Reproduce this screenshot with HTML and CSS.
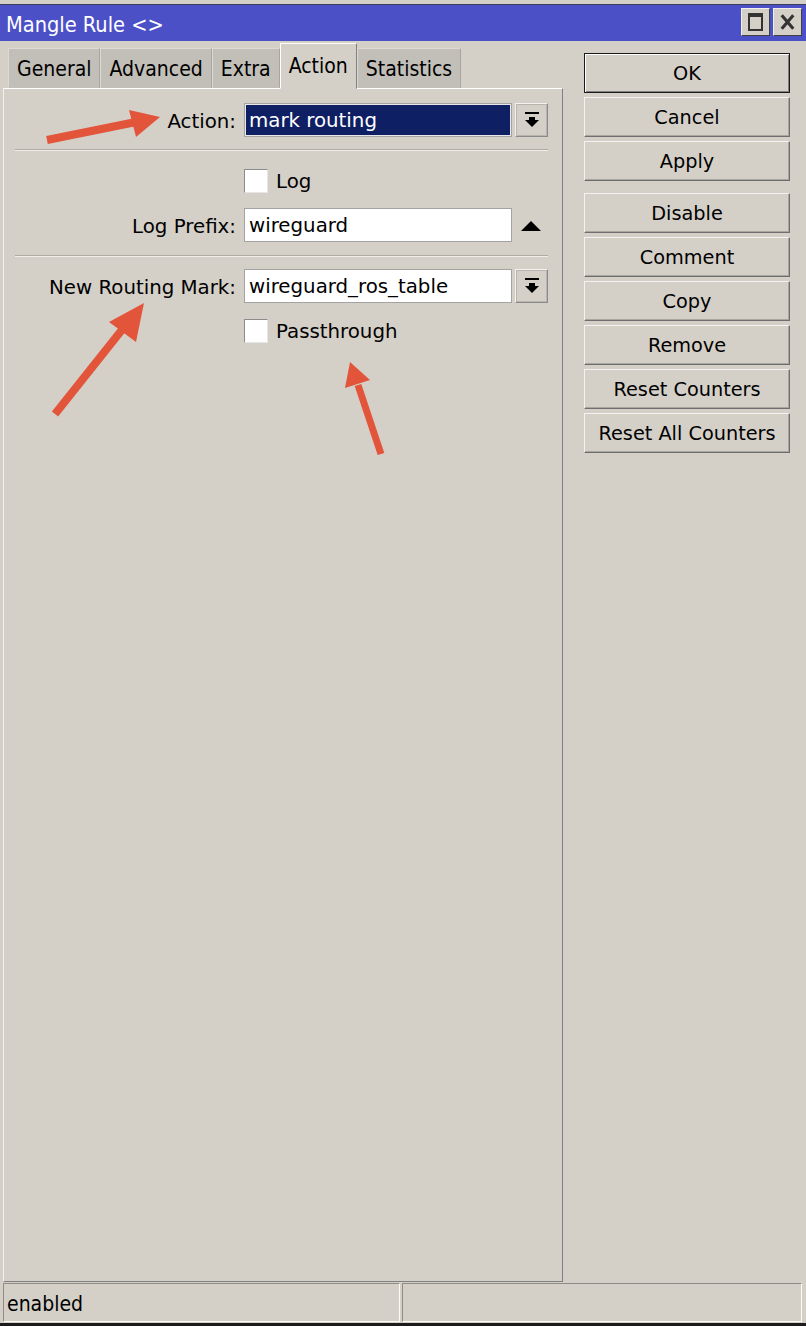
FILE: index.html
```html
<!DOCTYPE html>
<html lang="en">
<head>
    <meta charset="UTF-8">
    <meta name="viewport" content="width=device-width, initial-scale=1.0">
    <title>Mangle Rule</title>
    <link rel="stylesheet" href="styles.css">
</head>
<body>
<div class="window">
    <div class="titlebar">
        <span class="title">Mangle Rule &lt;&gt;</span>
        <span class="tb-btn tb-max">
            <svg width="27" height="26" viewBox="0 0 27 26"><rect x="7" y="5" width="13" height="16" fill="none" stroke="#333" stroke-width="2"/><rect x="7" y="5" width="13" height="3" fill="#333"/></svg>
        </span>
        <span class="tb-btn">
            <svg width="28" height="26" viewBox="0 0 28 26"><path d="M8 6 L20 20 M20 6 L8 20" stroke="#333" stroke-width="3.2"/></svg>
        </span>
    </div>

    <div class="main">
        <div class="left">
            <div class="tabs">
                <div class="tab">General</div>
                <div class="tab">Advanced</div>
                <div class="tab">Extra</div>
                <div class="tab active">Action</div>
                <div class="tab">Statistics</div>
            </div>
            <div class="panel">
                <div class="row row-action">
                    <span class="lbl">Action:</span>
                    <div class="field selected">mark routing</div>
                    <div class="drop">
                        <svg width="16" height="16" viewBox="0 0 16 16"><rect x="1" y="0" width="14" height="2"/><rect x="5" y="5" width="6" height="4"/><polygon points="1,8 15,8 8,15"/></svg>
                    </div>
                </div>
                <div class="sep sep-one"></div>
                <div class="row row-check">
                    <span class="lbl"></span>
                    <label class="check"><span class="box"></span>Log</label>
                </div>
                <div class="row row-prefix">
                    <span class="lbl">Log Prefix:</span>
                    <div class="field">wireguard</div>
                    <div class="up">
                        <svg width="20" height="10" viewBox="0 0 20 10"><polygon points="0,10 20,10 10,0"/></svg>
                    </div>
                </div>
                <div class="sep sep-two"></div>
                <div class="row row-mark">
                    <span class="lbl">New Routing Mark:</span>
                    <div class="field">wireguard_ros_table</div>
                    <div class="drop">
                        <svg width="16" height="16" viewBox="0 0 16 16"><rect x="1" y="0" width="14" height="2"/><rect x="5" y="5" width="6" height="4"/><polygon points="1,8 15,8 8,15"/></svg>
                    </div>
                </div>
                <div class="row row-pass">
                    <span class="lbl"></span>
                    <label class="check"><span class="box"></span>Passthrough</label>
                </div>
            </div>
        </div>

        <div class="buttons">
            <div class="btn default">OK</div>
            <div class="btn">Cancel</div>
            <div class="btn">Apply</div>
            <div class="btn group">Disable</div>
            <div class="btn">Comment</div>
            <div class="btn">Copy</div>
            <div class="btn">Remove</div>
            <div class="btn">Reset Counters</div>
            <div class="btn">Reset All Counters</div>
        </div>
    </div>

    <div class="status">
        <div class="pane pane-left">enabled</div>
        <div class="pane pane-right"></div>
    </div>

    <!-- annotation arrows drawn over the dialog -->
    <svg class="marks" width="806" height="1326" viewBox="0 0 806 1326">
        <g fill="#e2553a" stroke="#e2553a">
            <line x1="47" y1="140" x2="136" y2="122" stroke-width="8"/>
            <polygon points="160,117 129,110 136,137" stroke="none"/>
            <line x1="55" y1="414" x2="125" y2="326" stroke-width="8"/>
            <polygon points="144,303 109,322 136,342" stroke="none"/>
            <line x1="381" y1="454" x2="358" y2="385" stroke-width="7"/>
            <polygon points="350,362 345,388 370,380" stroke="none"/>
        </g>
    </svg>
</div>
</body>
</html>
```

FILE: styles.css
```css
body {
    margin: 0;
    padding: 0;
    background: #d4d0c8;
    color: #000;
    font-family: "DejaVu Sans", Verdana, sans-serif;
    font-size: 19.8px;
}
.window {
    position: relative;
    width: 806px;
    height: 1326px;
    box-sizing: border-box;
    padding-top: 4px;
    border-bottom: 3px solid #1c1c1c;
    display: flex;
    flex-direction: column;
    overflow: hidden;
}
.titlebar {
    height: 36px;
    border-top: 1px solid #3c3c5a;
    background: #4c50c7;
    color: #fff;
    display: flex;
    align-items: flex-start;
    padding-right: 4px;
}
.title {
    font-family: "DejaVu Sans Condensed", "DejaVu Sans", sans-serif;
    font-stretch: semi-condensed;
    font-size: 21.6px;
    line-height: 39px;
    padding-left: 6px;
    flex: 1;
}
.tb-btn {
    margin-top: 3px;
    margin-left: 3px;
    width: 29px;
    height: 28px;
    box-sizing: border-box;
    background: #d4d0c8;
    border: 1px solid;
    border-color: #f2f0ec #404040 #404040 #f2f0ec;
    display: flex;
    align-items: center;
    justify-content: center;
}
.tb-btn svg {
    display: block;
}
.main {
    flex: 1;
    display: flex;
    margin-top: 2px;
    min-height: 0;
}
.left {
    width: 560px;
    margin-left: 3px;
    margin-bottom: 1px;
    display: flex;
    flex-direction: column;
}
.tabs {
    height: 45px;
    padding-left: 5px;
    display: flex;
    align-items: flex-end;
    font-family: "DejaVu Sans Condensed", "DejaVu Sans", sans-serif;
    font-stretch: semi-condensed;
    font-size: 21px;
}
.tab {
    height: 40px;
    box-sizing: border-box;
    padding: 0 8px;
    line-height: 41px;
    background: #c2bfb8;
    border: 1px solid;
    border-color: #dedad3 #a9a6a0 transparent #dedad3;
}
.tab.active {
    position: relative;
    z-index: 1;
    height: 46px;
    line-height: 44px;
    margin-bottom: -1px;
    background: #d4d0c8;
    border-color: #fff #808080 transparent #fff;
}
.panel {
    flex: 1;
    border: 1px solid;
    border-color: #fff #808080 #808080 #f4f2ee;
    padding-top: 14px;
    padding-left: 0;
}
.row {
    height: 34px;
    display: flex;
    align-items: center;
}
.lbl {
    width: 232px;
    text-align: right;
    flex: none;
    padding-top: 2px;
}
.field {
    margin-left: 8px;
    width: 268px;
    height: 34px;
    box-sizing: border-box;
    background: #fff;
    border: 1px solid #a3a3a3;
    padding-left: 4px;
    line-height: 34px;
    white-space: nowrap;
}
.field.selected {
    background: #0f1f64;
    color: #fff;
    box-shadow: inset 0 0 0 1px #e8e8e8;
}
.drop {
    margin-left: 3px;
    width: 33px;
    height: 34px;
    box-sizing: border-box;
    border: 1px solid;
    border-color: #f4f2ee #8a8a8a #8a8a8a #f4f2ee;
    box-shadow: inset 0 0 0 1px #b8b5ae;
    display: flex;
    align-items: center;
    justify-content: center;
}
.drop svg,
.up svg {
    display: block;
}
.up {
    margin-left: 9px;
    width: 20px;
    display: flex;
    align-items: center;
    padding-top: 1px;
}
.sep {
    margin-left: 11px;
    width: 533px;
    border-top: 1px solid #aeaba4;
    border-bottom: 1px solid #f0eee9;
}
.sep-one {
    margin-top: 12px;
    margin-bottom: 13px;
}
.sep-two {
    margin-top: 13px;
    margin-bottom: 12px;
}
.row-prefix {
    margin-top: 10px;
}
.row-pass {
    margin-top: 11px;
}
.check {
    margin-left: 8px;
    display: flex;
    align-items: center;
}
.box {
    width: 24px;
    height: 24px;
    box-sizing: border-box;
    background: #fff;
    border: 1px solid;
    border-color: #8c8c8c #e6e6e6 #e6e6e6 #8c8c8c;
    margin-right: 8px;
}
.buttons {
    margin-left: 21px;
    margin-top: 10px;
    width: 206px;
    display: flex;
    flex-direction: column;
    gap: 4px;
    font-size: 19.3px;
}
.btn {
    height: 40px;
    box-sizing: border-box;
    border: 1px solid;
    border-color: #f4f2ee #6e6e6e #6e6e6e #f4f2ee;
    box-shadow: inset -1px -1px 0 #a9a6a0;
    text-align: center;
    line-height: 39px;
}
.btn.default {
    border: 1px solid #1a1a1a;
    box-shadow: inset 1px 1px 0 #fff, inset -1px -1px 0 #808080;
}
.btn.group {
    margin-top: 8px;
}
.status {
    height: 39px;
    margin: 0 4px 1px 3px;
    display: flex;
    gap: 2px;
    font-family: "DejaVu Sans Condensed", "DejaVu Sans", sans-serif;
    font-stretch: semi-condensed;
    font-size: 21px;
}
.pane {
    box-sizing: border-box;
    border: 1px solid;
    border-color: #8e8c86 #fbfaf7 #fbfaf7 #8e8c86;
    padding-left: 3px;
    line-height: 40px;
}
.pane-left {
    width: 397px;
}
.pane-right {
    flex: 1;
}
.marks {
    position: absolute;
    left: 0;
    top: 0;
    pointer-events: none;
}
```
